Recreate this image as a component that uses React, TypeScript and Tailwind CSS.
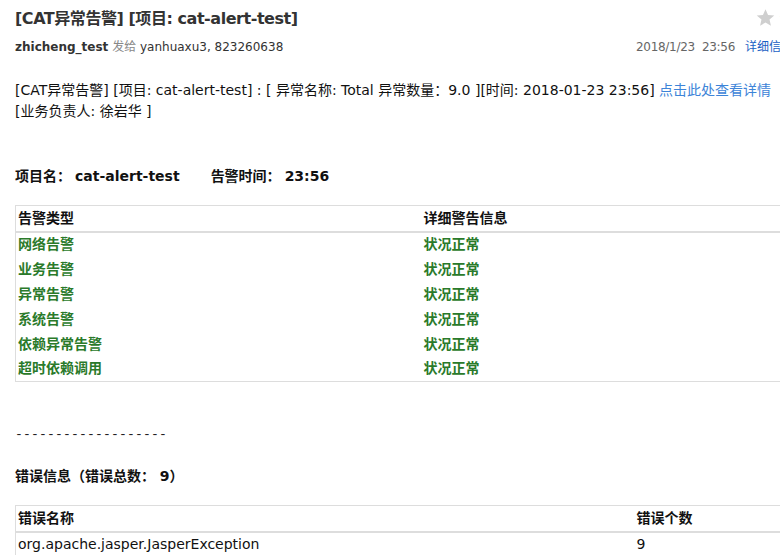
const FONT = "font-['DejaVu_Sans','Noto_Sans_CJK_SC',sans-serif]";

const alertRows = [
  "网络告警",
  "业务告警",
  "异常告警",
  "系统告警",
  "依赖异常告警",
  "超时依赖调用",
];

const StarIcon = () => (
  <svg viewBox="0 0 24 24" className="w-[21px] h-[21px] fill-[#cfcfcf]">
    <path d="M12 2.5l2.9 6.6 7.1.6-5.4 4.7 1.6 7-6.2-3.7-6.2 3.7 1.6-7L2 9.7l7.1-.6z" />
  </svg>
);

export default function App() {
  return (
    <div className={`w-[780px] h-[555px] overflow-hidden bg-white text-[#222] ${FONT}`}>
      <div className="relative px-[15px] pt-[7px]">
        <h1 className="text-[16px] font-bold leading-[24px] text-[#333] tracking-[-0.45px]">
          [CAT异常告警] [项目: cat-alert-test]
        </h1>
        <div className="absolute right-[-6px] top-[7px] flex items-center gap-[4px]">
          <StarIcon />
          <span className="text-[#cfcfcf] text-[12px]">▾</span>
        </div>
        <div className="flex items-center justify-between mt-[5px] text-[12px] leading-[22px] whitespace-nowrap">
          <div>
            <span className="font-bold text-[#333]">zhicheng_test</span>
            <span className="text-[#888]"> 发给 </span>
            <span className="text-[#333]">yanhuaxu3, 823260638</span>
          </div>
          <div className="flex items-center -mr-[28px]">
            <span className="text-[#666] whitespace-pre tracking-[-0.3px]">2018/1/23  23:56</span>
            <span className="ml-[10px] text-[#1a61c4]">详细信息</span>
          </div>
        </div>

        <div className="mt-[22px] text-[14px] leading-[21px] text-[#111] whitespace-nowrap">
          <p>
            [CAT异常告警] [项目: cat-alert-test] : [ 异常名称: Total 异常数量：9.0 ][时间: 2018-01-23 23:56]{" "}
            <a className="text-[#3d84d8]">点击此处查看详情</a>
          </p>
          <p>[业务负责人: 徐岩华 ]</p>
        </div>

        <p className="mt-[44px] text-[14px] font-bold leading-[20px] text-[#111] whitespace-nowrap">
          <span>项目名：</span>
          <span className="ml-[4px]">cat-alert-test</span>
          <span className="ml-[31px]">告警时间：</span>
          <span className="ml-[4px]">23:56</span>
        </p>

        <table className="mt-[19px] w-[820px] border border-[#ddd] border-collapse text-[14px] font-bold">
          <thead>
            <tr className="border-b-2 border-[#ddd] text-[#111]">
              <th className="w-[408px] h-[26px] text-left font-bold px-[2px]">告警类型</th>
              <th className="text-left font-bold px-0">详细警告信息</th>
            </tr>
          </thead>
          <tbody className="text-[#2a7a2a]">
            {alertRows.map((row) => (
              <tr key={row} className="h-[25px]">
                <td className="px-[2px]">{row}</td>
                <td>状况正常</td>
              </tr>
            ))}
          </tbody>
        </table>

        <p className="mt-[43px] font-['Liberation_Mono',monospace] text-[13px] leading-[20px] text-[#222] tracking-[0.2px]">
          -------------------
        </p>

        <p className="mt-[21px] text-[14px] font-bold leading-[20px] text-[#111]">
          错误信息（错误总数： 9）
        </p>

        <table className="mt-[19px] w-[820px] border border-[#ddd] border-collapse text-[14px]">
          <thead>
            <tr className="border-b-2 border-[#ddd] text-[#111]">
              <th className="w-[621px] h-[26px] text-left font-bold px-[2px]">错误名称</th>
              <th className="text-left font-bold px-0">错误个数</th>
            </tr>
          </thead>
          <tbody className="text-[#111]">
            <tr className="h-[25px]">
              <td className="px-[2px]">org.apache.jasper.JasperException</td>
              <td>9</td>
            </tr>
          </tbody>
        </table>
      </div>
    </div>
  );
}
